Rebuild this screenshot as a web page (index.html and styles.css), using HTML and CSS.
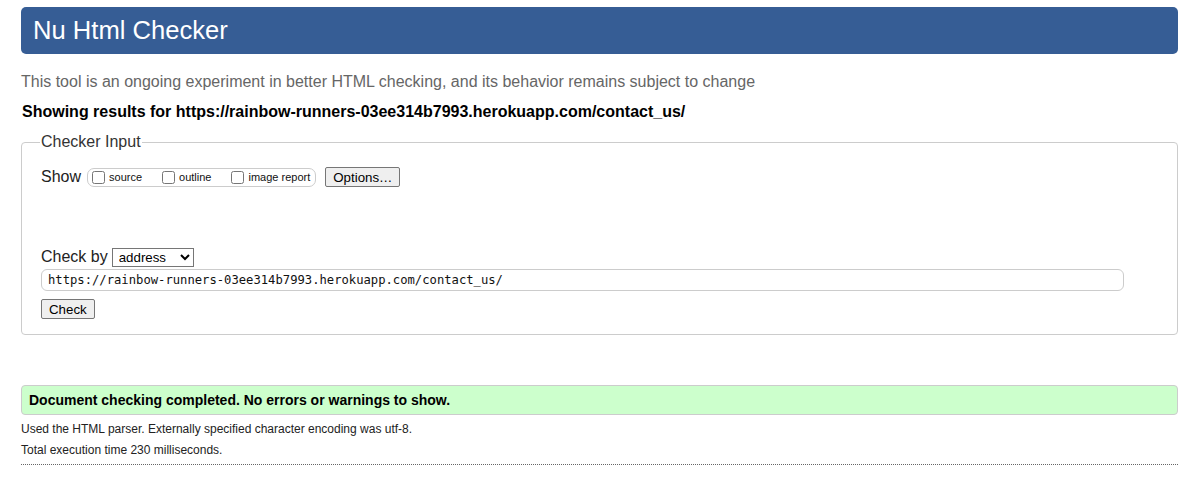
FILE: index.html
```html
<!DOCTYPE html>
<html>
<head>
<meta charset="utf-8">
<link rel="stylesheet" href="styles.css">
</head>
<body>

<h1 class="baslik">Nu Html Checker</h1>
<p class="aciklama">This tool is an ongoing experiment in better HTML checking, and its behavior remains subject to change</p>
<p class="sonuclar">Showing results for https://rainbow-runners-03ee314b7993.herokuapp.com/contact_us/</p>

<form class="kontrol" action="#">
  <fieldset class="girdi">
    <legend>Checker Input</legend>
    <div class="goster">
      <span class="etiket">Show</span>
      <span class="secenekler">
        <label><input type="checkbox">source</label>
        <label><input type="checkbox">outline</label>
        <label><input type="checkbox">image report</label>
      </span>
      <button type="button" class="dugme">Options…</button>
    </div>
    <div class="kontrolSatiri">
      <span class="etiket">Check by</span>
      <select class="secim">
        <option>address</option>
        <option>file upload</option>
        <option>text input</option>
      </select>
    </div>
    <input type="text" class="adres" value="https://rainbow-runners-03ee314b7993.herokuapp.com/contact_us/">
    <div class="dugmeSatiri">
      <button type="button" class="dugme">Check</button>
    </div>
  </fieldset>
</form>

<p class="basarili">Document checking completed. No errors or warnings to show.</p>
<p class="bilgi">Used the HTML parser. Externally specified character encoding was utf-8.</p>
<p class="bilgi">Total execution time 230 milliseconds.</p>
<hr class="cizgi">

</body>
</html>
```

FILE: styles.css
```css
body {
  margin: 0;
  padding: 7px 19px 0 21px;
  font-family: "Liberation Sans", Arial, Helvetica, sans-serif;
  color: #000;
  background-color: #fff;
}

.baslik {
  margin: 0;
  height: 47px;
  line-height: 46px;
  padding: 0 12px;
  background-color: #365d95;
  color: #fff;
  font-size: 25.6px;
  font-weight: normal;
  border-radius: 5px;
}

.aciklama {
  margin: 17px 0 0 0;
  line-height: 22px;
  font-size: 16px;
  color: #666;
}

.sonuclar {
  margin: 8px 0 0 1px;
  line-height: 22px;
  font-size: 16px;
  font-weight: bold;
}

.kontrol {
  margin: 10px 0 0 0;
}

.girdi {
  margin: 0;
  padding: 12px 19px 15px 19px;
  border: 1px solid #ccc;
  border-radius: 4px;
}

.girdi legend {
  font-size: 16px;
  padding: 0 1px;
  margin-left: -1px;
  color: #333;
}

.goster {
  display: flex;
  align-items: center;
  height: 20px;
  margin-top: 4px;
}

.etiket {
  font-size: 16px;
  color: #222;
}

.goster .etiket {
  margin-right: 6px;
}

.secenekler {
  display: inline-flex;
  align-items: center;
  height: 17px;
  padding: 0 5px 0 4px;
  border: 1px solid #ccc;
  border-radius: 7px;
  gap: 20px;
}

.secenekler label {
  font-size: 11px;
  display: inline-flex;
  align-items: center;
  color: #111;
}

.secenekler input {
  margin: 0 4px 0 0;
  width: 13px;
  height: 13px;
}

.goster .dugme {
  margin-left: 9px;
}

.dugme {
  font-family: "Liberation Sans", Arial, sans-serif;
  font-size: 13.3px;
  padding: 1px 7px;
  height: 20px;
  border: 1px solid #767676;
  border-radius: 2px;
  background-color: #efefef;
  color: #000;
}

.kontrolSatiri {
  margin-top: 60px;
  display: flex;
  align-items: center;
  gap: 4px;
  height: 20px;
}

.secim {
  font-family: "Liberation Sans", Arial, sans-serif;
  font-size: 13.3px;
  width: 82px;
  height: 19px;
  border: 1px solid #767676;
  border-radius: 0;
  padding: 0 2px;
  background-color: #fff;
}

.adres {
  display: block;
  margin-top: 2px;
  width: 1083px;
  height: 22px;
  box-sizing: border-box;
  border: 1px solid #ccc;
  border-radius: 6px;
  padding: 0 6px;
  font-family: "DejaVu Sans Mono", "Liberation Mono", monospace;
  font-size: 12.2px;
  color: #111;
}

.dugmeSatiri {
  margin-top: 8px;
  height: 20px;
}

.basarili {
  margin: 50px 0 0 0;
  height: 30px;
  box-sizing: border-box;
  line-height: 28px;
  padding: 0 7px;
  background-color: #ccffcc;
  border: 1px solid #ccc;
  border-radius: 4px;
  font-size: 14px;
  font-weight: bold;
}

.bilgi {
  margin: 7px 0 0 0;
  font-size: 12px;
  line-height: 14px;
  color: #222;
}

.cizgi {
  margin: 7px 0 0 0;
  border: 0;
  border-top: 1px dotted #666;
}
```
